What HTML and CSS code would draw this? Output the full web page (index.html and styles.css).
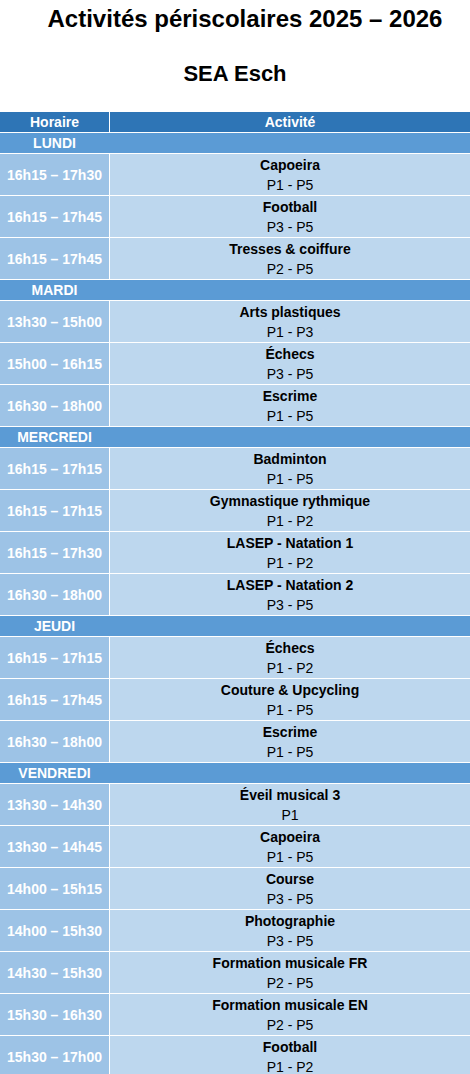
FILE: index.html
```html
<!DOCTYPE html>
<html lang="fr">
<head>
<meta charset="utf-8">
<title>Activités périscolaires 2025 – 2026</title>
<link rel="stylesheet" href="styles.css">
</head>
<body>
<h1 class="title">Activités périscolaires 2025 – 2026</h1>
<h2 class="subtitle">SEA Esch</h2>
<div class="table">
  <div class="row head"><div class="c time">Horaire</div><div class="c act">Activité</div></div>

  <div class="day"><span>LUNDI</span></div>
  <div class="row"><div class="c time">16h15 – 17h30</div><div class="c act"><b>Capoeira</b><span>P1 - P5</span></div></div>
  <div class="row"><div class="c time">16h15 – 17h45</div><div class="c act"><b>Football</b><span>P3 - P5</span></div></div>
  <div class="row"><div class="c time">16h15 – 17h45</div><div class="c act"><b>Tresses &amp; coiffure</b><span>P2 - P5</span></div></div>

  <div class="day"><span>MARDI</span></div>
  <div class="row"><div class="c time">13h30 – 15h00</div><div class="c act"><b>Arts plastiques</b><span>P1 - P3</span></div></div>
  <div class="row"><div class="c time">15h00 – 16h15</div><div class="c act"><b>Échecs</b><span>P3 - P5</span></div></div>
  <div class="row"><div class="c time">16h30 – 18h00</div><div class="c act"><b>Escrime</b><span>P1 - P5</span></div></div>

  <div class="day"><span>MERCREDI</span></div>
  <div class="row"><div class="c time">16h15 – 17h15</div><div class="c act"><b>Badminton</b><span>P1 - P5</span></div></div>
  <div class="row"><div class="c time">16h15 – 17h15</div><div class="c act"><b>Gymnastique rythmique</b><span>P1 - P2</span></div></div>
  <div class="row"><div class="c time">16h15 – 17h30</div><div class="c act"><b>LASEP - Natation 1</b><span>P1 - P2</span></div></div>
  <div class="row"><div class="c time">16h30 – 18h00</div><div class="c act"><b>LASEP - Natation 2</b><span>P3 - P5</span></div></div>

  <div class="day"><span>JEUDI</span></div>
  <div class="row"><div class="c time">16h15 – 17h15</div><div class="c act"><b>Échecs</b><span>P1 - P2</span></div></div>
  <div class="row"><div class="c time">16h15 – 17h45</div><div class="c act"><b>Couture &amp; Upcycling</b><span>P1 - P5</span></div></div>
  <div class="row"><div class="c time">16h30 – 18h00</div><div class="c act"><b>Escrime</b><span>P1 - P5</span></div></div>

  <div class="day"><span>VENDREDI</span></div>
  <div class="row"><div class="c time">13h30 – 14h30</div><div class="c act"><b>Éveil musical 3</b><span>P1</span></div></div>
  <div class="row"><div class="c time">13h30 – 14h45</div><div class="c act"><b>Capoeira</b><span>P1 - P5</span></div></div>
  <div class="row"><div class="c time">14h00 – 15h15</div><div class="c act"><b>Course</b><span>P3 - P5</span></div></div>
  <div class="row"><div class="c time">14h00 – 15h30</div><div class="c act"><b>Photographie</b><span>P3 - P5</span></div></div>
  <div class="row"><div class="c time">14h30 – 15h30</div><div class="c act"><b>Formation musicale FR</b><span>P2 - P5</span></div></div>
  <div class="row"><div class="c time">15h30 – 16h30</div><div class="c act"><b>Formation musicale EN</b><span>P2 - P5</span></div></div>
  <div class="row"><div class="c time">15h30 – 17h00</div><div class="c act"><b>Football</b><span>P1 - P2</span></div></div>
</div>
</body>
</html>
```

FILE: styles.css
```css
html, body {
  margin: 0;
  padding: 0;
  background: #ffffff;
}
body {
  font-family: "Liberation Sans", Arial, sans-serif;
  color: #000;
  width: 470px;
}
.title {
  margin: 4px 0 0 0;
  padding-left: 20px;
  font-size: 24px;
  line-height: 30px;
  font-weight: bold;
  text-align: center;
}
.subtitle {
  margin: 25px 0 0 0;
  font-size: 22px;
  line-height: 30px;
  font-weight: bold;
  text-align: center;
}
.table {
  margin-top: 23px;
  display: flex;
  flex-direction: column;
  gap: 1px;
  background: #ffffff;
}
.row {
  display: grid;
  grid-template-columns: 109px 1fr;
  column-gap: 1px;
  height: 41px;
}
.c {
  display: flex;
  flex-direction: column;
  align-items: center;
  justify-content: center;
  font-size: 14px;
  line-height: 20px;
}
.time {
  background: #9dc3e6;
  color: #ffffff;
  font-weight: bold;
}
.act {
  background: #bdd7ee;
  justify-content: flex-start;
  padding-top: 1px;
}
.act b {
  font-weight: bold;
}
.act span {
  font-weight: normal;
}
.row.head {
  height: 20px;
}
.row.head .c {
  background: #2e75b6;
  color: #ffffff;
  font-weight: bold;
  justify-content: center;
  padding-top: 0;
}
.day {
  height: 20px;
  background: #5b9bd5;
  display: flex;
  align-items: center;
}
.day span {
  width: 109px;
  text-align: center;
  color: #ffffff;
  font-weight: bold;
  font-size: 14px;
  line-height: 20px;
}
```
